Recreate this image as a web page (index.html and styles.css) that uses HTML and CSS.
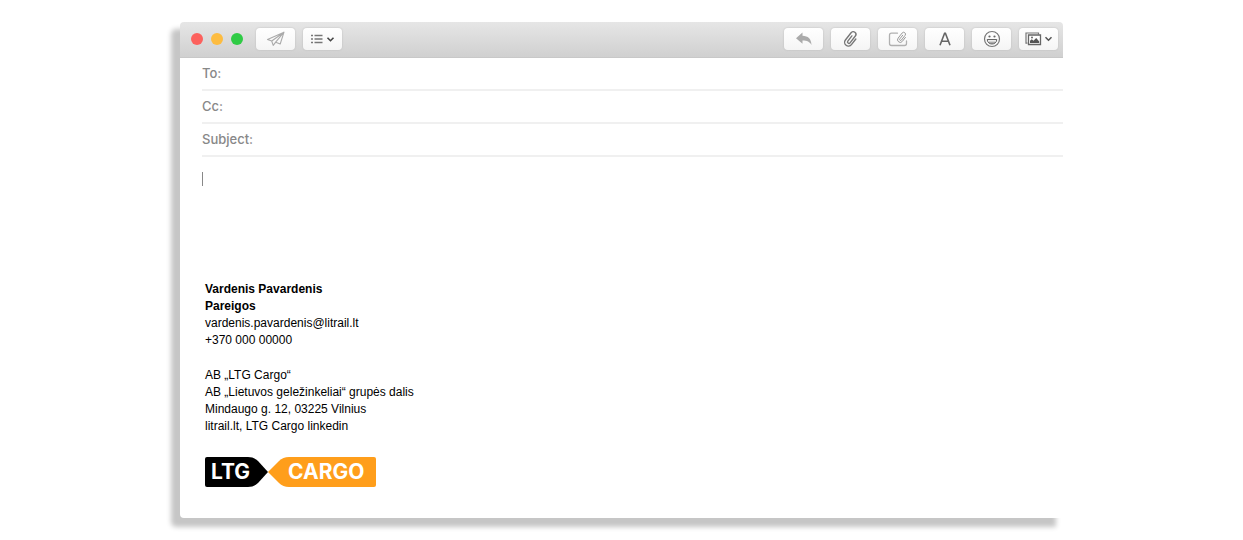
FILE: index.html
```
<!DOCTYPE html>
<html lang="lt">
<head>
    <meta charset="UTF-8">
    <meta name="viewport" content="width=device-width, initial-scale=1.0">
    <title>LTG Cargo</title>
    <link rel="stylesheet" href="styles.css">
</head>

<body>
<div class="window">
  <div class="toolbar">
    <div class="dots">
      <span class="dot dot-red"></span>
      <span class="dot dot-yellow"></span>
      <span class="dot dot-green"></span>
    </div>

    <div class="tools">
      <button type="button" class="tool" aria-label="Send">
        <svg width="20" height="16" viewBox="0 0 20 16" fill="none" stroke="#aaa" stroke-width="1.1" stroke-linejoin="round">
          <path d="M18 1.2 L1.5 8.4 L5.7 10 L18 1.2 L14.2 13 L9.7 11.2 L18 1.2 M5.7 10 L7.2 14.4 L9.7 11.2"/>
        </svg>
      </button>
      <button type="button" class="tool" aria-label="Header fields">
        <svg width="24" height="12" viewBox="0 0 24 12" fill="none">
          <path d="M0 2.5h2M0 6h2M0 9.5h2M3.5 2.5h8M3.5 6h8M3.5 9.5h8" stroke="#777" stroke-width="1.4"/>
          <path d="M16.5 4.7l3 3 3-3" stroke="#444" stroke-width="1.6"/>
        </svg>
      </button>
    </div>

    <div class="tools tools-right">
      <button type="button" class="tool" aria-label="Reply">
        <svg width="18" height="14" viewBox="0 0 18 14">
          <path d="M7.5 .5v3.3c5.5.2 8.7 3 9 9.2-1.8-3.3-4.3-4.5-9-4.5v3.3L1 6.2z" fill="#aaa"/>
        </svg>
      </button>
      <button type="button" class="tool" aria-label="Attach">
        <svg width="18" height="18" viewBox="0 0 18 18" fill="none" stroke="#777" stroke-width="1.4" stroke-linecap="round">
          <path transform="rotate(38 9 9)" d="M12.8 6v7.2a3.8 3.8 0 0 1-7.6 0V4a2.7 2.7 0 0 1 5.4 0v8.6a1.4 1.4 0 0 1-2.8 0V6"/>
        </svg>
      </button>
      <button type="button" class="tool" aria-label="Markup">
        <svg width="20" height="16" viewBox="0 0 20 16" fill="none" stroke="#b0b0b0" stroke-width="1.3" stroke-linecap="round">
          <path d="M9.5 2.2h-6q-2 0-2 2v8.3q0 2 2 2h13q2 0 2-2V10"/>
          <path transform="translate(8 0) rotate(38 6 6) scale(.7)" d="M12.8 6v7.2a3.8 3.8 0 0 1-7.6 0V4a2.7 2.7 0 0 1 5.4 0v8.6a1.4 1.4 0 0 1-2.8 0V6" stroke="#999"/>
        </svg>
      </button>
      <button type="button" class="tool" aria-label="Format">
        <svg width="14" height="14" viewBox="0 0 14 14" fill="none" stroke="#666" stroke-width="1.6">
          <path d="M2 13.2L6.6 1.2h.8L12 13.2M3.7 9.2h6.6"/>
        </svg>
      </button>
      <button type="button" class="tool" aria-label="Emoji">
        <svg width="18" height="18" viewBox="0 0 18 18">
          <circle cx="9" cy="9" r="7.5" fill="none" stroke="#777" stroke-width="1.2"/>
          <circle cx="6.5" cy="6.5" r="1.1" fill="#666"/>
          <circle cx="11.5" cy="6.5" r="1.1" fill="#666"/>
          <path d="M4.2 9.5h9.6c-.3 6-9.3 6-9.6 0z" fill="#aaa" stroke="#666"/>
          <path d="M5 10.2h8v1.3H5z" fill="#fff"/>
        </svg>
      </button>
      <button type="button" class="tool" aria-label="Photos">
        <svg width="28" height="16" viewBox="0 0 28 16" fill="none">
          <path d="M2.5 12.2H1V2h12.5v1.5" stroke="#777" stroke-width="1.2"/>
          <path d="M3.5 4h12v9.5h-12z" fill="#fff" stroke="#666" stroke-width="1.3"/>
          <path d="M5 12V9.8l1.8-1.5 1.7 1.4L11.2 7l3 3.5V12z" fill="#555"/>
          <circle cx="7" cy="6.5" r="1" fill="#666"/>
          <path d="M20.5 6.2l3 3 3-3" stroke="#555" stroke-width="1.5"/>
        </svg>
      </button>
    </div>
  </div>

  <form class="fields">
    <div class="field">
      <label for="to">To:</label>
      <input type="text" id="to">
    </div>
    <div class="field">
      <label for="cc">Cc:</label>
      <input type="text" id="cc">
    </div>
    <div class="field">
      <label for="subject">Subject:</label>
      <input type="text" id="subject">
    </div>
  </form>

  <div class="message">
    <div class="caret"></div>

    <div class="signature">
      <p>
        <b>Vardenis Pavardenis</b><br>
        <b>Pareigos</b><br>
        vardenis.pavardenis@litrail.lt<br>
        +370 000 00000
      </p>
      <p>
        AB „LTG Cargo“<br>
        AB „Lietuvos geležinkeliai“ grupės dalis<br>
        Mindaugo g. 12, 03225 Vilnius<br>
        <a href="#">litrail.lt</a>, <a href="#">LTG Cargo linkedin</a>
      </p>
      <svg class="logo" width="171" height="30" viewBox="0 0 171 30">
        <path d="M2 0h41q6 0 10 4l10 11-10 11q-4 4-10 4H2q-2 0-2-2V2q0-2 2-2z" fill="#000"/>
        <path d="M169 0H84q-6 0-10 4L63 15l11 11q4 4 10 4h85q2 0 2-2V2q0-2-2-2z" fill="#ff9e1b"/>
        <text x="6" y="22">LTG</text>
        <text x="83" y="22">CARGO</text>
      </svg>
    </div>
  </div>
</div>
</body>
</html>
```

FILE: styles.css
```
body {
  margin: 0;
  background: #fff;
  font-family: "Liberation Sans", Arial, sans-serif;
}

.window {
  margin: 22px 180px;
  border-radius: 4px 4px 0 4px;
  background: #fff;
  box-shadow: -8px 8px 5px 1px #c6c6c6;
}

.toolbar {
  display: flex;
  align-items: center;
  height: 34px;
  padding: 0 5px 1px 11px;
  border-bottom: 1px solid #c8c8c8;
  border-radius: 4px 4px 0 0;
  background: linear-gradient(#e6e6e6, #d0d0d0);
}

.dots {
  display: flex;
  gap: 8px;
  margin-right: 13px;
}

.dot {
  width: 12px;
  height: 12px;
  border-radius: 50%;
}

.dot-red {
  background: #fc615d;
}

.dot-yellow {
  background: #fdbc40;
}

.dot-green {
  background: #2fcb45;
}

.tools {
  display: flex;
  gap: 8px;
}

.tools-right {
  margin-left: auto;
}

.tool {
  display: flex;
  align-items: center;
  justify-content: center;
  width: 39px;
  height: 22px;
  padding: 0;
  border: none;
  border-radius: 4px;
  background: linear-gradient(#fff, #f5f5f5);
  box-shadow: 0 0 2px #b8b8b8;
}

.fields {
  margin-left: 22px;
}

.field {
  display: flex;
  align-items: center;
  height: 29px;
  padding-bottom: 2px;
  border-bottom: 2px solid #f0f0f0;
}

.field label {
  color: #888;
  font: 500 13px/16px Inter, sans-serif;
}

.field input {
  flex: 1;
  min-width: 0;
  border: none;
  outline: none;
  background: none;
}

.message {
  padding: 15px 22px 31px;
}

.caret {
  width: 1px;
  height: 14px;
  background: #888;
}

.signature {
  margin: 95px 0 0 3px;
  color: #000;
  font-size: 12px;
  line-height: 17px;
}

.signature p {
  margin: 0 0 18px;
}

.signature a {
  color: inherit;
  text-decoration: none;
}

.logo {
  display: block;
  margin-top: 22px;
}

.logo text {
  fill: #fff;
  font: 700 21px Inter, sans-serif;
}
```
